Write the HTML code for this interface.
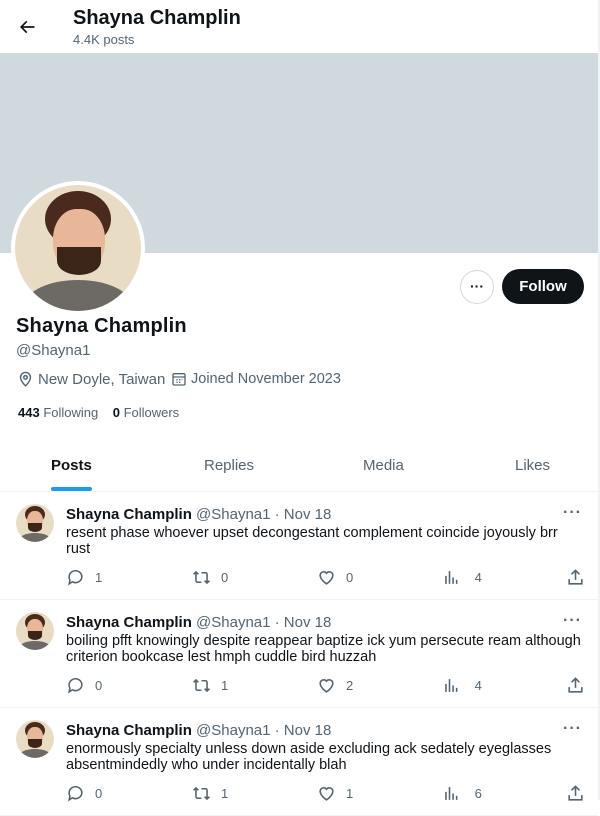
<!DOCTYPE html>
<html><head><meta charset="utf-8"><style>
*{box-sizing:border-box;margin:0;padding:0}
body{width:600px;height:800px;overflow:hidden;background:#fff;font-family:"Liberation Sans",Arial,sans-serif;color:#0f1419;position:relative}
.abs{position:absolute}
.gray{color:#536471}
.av{border-radius:50%;overflow:hidden;background:#e9dcc4;position:absolute}
.av .hair{position:absolute;background:#4a2a1c;border-radius:50%}
.av .face{position:absolute;background:#e8b79a;border-radius:45% 45% 50% 50%}
.av .beard{position:absolute;background:#3b2418;border-radius:0 0 50% 50%}
.av .shirt{position:absolute;background:#6d6a66;border-radius:50% 50% 0 0}
.post{position:absolute;left:0;width:598px;height:108px;border-bottom:1px solid #eff3f4}
.post .nm{position:absolute;left:66px;top:14px;font-size:15px;white-space:nowrap}
.post .tx{position:absolute;left:66px;top:33px;width:525px;font-size:14.5px;line-height:16px;color:#0f1419}
.post .dots{position:absolute;right:16px;top:12px;font-size:16px;color:#536471;letter-spacing:1px;font-weight:bold}
.act{position:absolute;top:76px;font-size:13px;color:#536471;display:flex;align-items:center}
.act svg{width:19px;height:19px;margin-right:10px}
</style></head><body>
<div class="abs" style="right:0;top:0;width:2px;height:800px;background:#eff3f4"></div>
<svg class="abs" style="left:17px;top:17px" width="20" height="20" viewBox="0 0 24 24"><path d="M7.414 13l5.043 5.04-1.414 1.42L3.586 12l7.457-7.46 1.414 1.42L7.414 11H21v2H7.414z" fill="#0f1419"/></svg>
<div class="abs" style="left:73px;top:7px;font-size:20px;font-weight:bold">Shayna Champlin</div>
<div class="abs gray" style="left:73px;top:32px;font-size:13px">4.4K posts</div>
<div class="abs" style="left:0;top:53px;width:598px;height:200px;background:#cfd9de"></div>
<div class="abs" style="left:11px;top:181px;width:134px;height:134px;border-radius:50%;background:#fff"></div>
<div class="av" style="left:15px;top:185px;width:126px;height:126px">
 <div class="shirt" style="left:10px;top:95px;width:106px;height:50px"></div>
 <div class="hair" style="left:30px;top:6px;width:66px;height:56px"></div>
 <div class="face" style="left:38px;top:24px;width:52px;height:66px"></div>
 <div class="beard" style="left:42px;top:62px;width:44px;height:28px"></div>
</div>
<div class="abs" style="left:460px;top:270px;width:34px;height:34px;border:1px solid #cfd9de;border-radius:50%;text-align:center;font-weight:bold;font-size:14px;line-height:30px">···</div>
<div class="abs" style="left:502px;top:269px;width:82px;height:35px;background:#0f1419;border-radius:18px;color:#fff;font-weight:bold;font-size:15px;text-align:center;line-height:35px">Follow</div>
<div class="abs" style="left:16px;top:315px;font-size:20px;font-weight:bold;letter-spacing:0.2px">Shayna Champlin</div>
<div class="abs gray" style="left:16px;top:342px;font-size:15px">@Shayna1</div>
<svg class="abs" style="left:17px;top:371px" width="17" height="17" viewBox="0 0 24 24" fill="none" stroke="#536471" stroke-width="2"><path d="M12 21s-7-6.5-7-12a7 7 0 0 1 14 0c0 5.5-7 12-7 12z"/><circle cx="12" cy="9" r="2.5"/></svg>
<div class="abs gray" style="left:38px;top:371px;font-size:15px">New Doyle, Taiwan</div>
<svg class="abs" style="left:171px;top:371px" width="16" height="16" viewBox="0 0 24 24" fill="none" stroke="#536471" stroke-width="2"><rect x="3" y="4" width="18" height="17" rx="2"/><path d="M3 9h18M8 13h2M12 13h2M8 17h2M12 17h2M16 13h1"/></svg>
<div class="abs gray" style="left:191px;top:371px;font-size:14.5px">Joined November 2023</div>
<div class="abs" style="left:18px;top:405px;font-size:13px"><b>443</b> <span class="gray">Following</span>&nbsp;&nbsp;&nbsp; <b>0</b> <span class="gray">Followers</span></div>
<div class="abs" style="left:51px;top:457px;font-size:15px;font-weight:bold">Posts</div>
<div class="abs gray" style="left:204px;top:457px;font-size:15px">Replies</div>
<div class="abs gray" style="left:363px;top:457px;font-size:15px">Media</div>
<div class="abs gray" style="left:515px;top:457px;font-size:15px">Likes</div>
<div class="abs" style="left:51px;top:487px;width:41px;height:4px;border-radius:2px;background:#1d9bf0"></div>
<div class="abs" style="left:0;top:491px;width:598px;height:1px;background:#eff3f4"></div>

<div class="post" style="top:492px">
 <div class="av" style="left:16px;top:12px;width:38px;height:38px"><div class="shirt" style="left:3px;top:29px;width:32px;height:14px"></div><div class="hair" style="left:9px;top:2px;width:20px;height:17px"></div><div class="face" style="left:11px;top:7px;width:16px;height:21px"></div><div class="beard" style="left:12px;top:19px;width:14px;height:9px"></div></div>
 <div class="nm"><b>Shayna Champlin</b> <span class="gray">@Shayna1 · Nov 18</span></div>
 <div class="dots">···</div>
 <div class="tx" style="width:500px">resent phase whoever upset decongestant complement coincide joyously brr rust</div>
 <div class="act" style="left:66px"><svg viewBox="0 0 24 24" fill="none" stroke="#536471" stroke-width="2"><path d="M4 11a8 7.5 0 1 1 4 6.5L4 20l1-4.5A7 7 0 0 1 4 11z"/></svg>1</div>
 <div class="act" style="left:192px"><svg viewBox="0 0 24 24" fill="none" stroke="#536471" stroke-width="2"><path d="M5 5v11a2 2 0 0 0 2 2h5M2 8l3-3 3 3M19 19V8a2 2 0 0 0-2-2h-5M22 16l-3 3-3-3"/></svg>0</div>
 <div class="act" style="left:317px"><svg viewBox="0 0 24 24" fill="none" stroke="#536471" stroke-width="2"><path d="M12 20s-8-5-8-11a4.5 4.5 0 0 1 8-2.5A4.5 4.5 0 0 1 20 9c0 6-8 11-8 11z"/></svg>0</div>
 <div class="act" style="left:442px"><svg viewBox="0 0 24 24" fill="none" stroke="#536471" stroke-width="2"><path d="M5 20V10M9.5 20V4M14 20v-8M18.5 20v-5"/></svg>&nbsp;4</div>
 <div class="act" style="left:566px"><svg viewBox="0 0 24 24" fill="none" stroke="#536471" stroke-width="2"><path d="M12 15V3M7 8l5-5 5 5M4 14v6h16v-6"/></svg></div>
</div>
<div class="post" style="top:600px">
 <div class="av" style="left:16px;top:12px;width:38px;height:38px"><div class="shirt" style="left:3px;top:29px;width:32px;height:14px"></div><div class="hair" style="left:9px;top:2px;width:20px;height:17px"></div><div class="face" style="left:11px;top:7px;width:16px;height:21px"></div><div class="beard" style="left:12px;top:19px;width:14px;height:9px"></div></div>
 <div class="nm"><b>Shayna Champlin</b> <span class="gray">@Shayna1 · Nov 18</span></div>
 <div class="dots">···</div>
 <div class="tx">boiling pfft knowingly despite reappear baptize ick yum persecute ream although criterion bookcase lest hmph cuddle bird huzzah</div>
 <div class="act" style="left:66px"><svg viewBox="0 0 24 24" fill="none" stroke="#536471" stroke-width="2"><path d="M4 11a8 7.5 0 1 1 4 6.5L4 20l1-4.5A7 7 0 0 1 4 11z"/></svg>0</div>
 <div class="act" style="left:192px"><svg viewBox="0 0 24 24" fill="none" stroke="#536471" stroke-width="2"><path d="M5 5v11a2 2 0 0 0 2 2h5M2 8l3-3 3 3M19 19V8a2 2 0 0 0-2-2h-5M22 16l-3 3-3-3"/></svg>1</div>
 <div class="act" style="left:317px"><svg viewBox="0 0 24 24" fill="none" stroke="#536471" stroke-width="2"><path d="M12 20s-8-5-8-11a4.5 4.5 0 0 1 8-2.5A4.5 4.5 0 0 1 20 9c0 6-8 11-8 11z"/></svg>2</div>
 <div class="act" style="left:442px"><svg viewBox="0 0 24 24" fill="none" stroke="#536471" stroke-width="2"><path d="M5 20V10M9.5 20V4M14 20v-8M18.5 20v-5"/></svg>&nbsp;4</div>
 <div class="act" style="left:566px"><svg viewBox="0 0 24 24" fill="none" stroke="#536471" stroke-width="2"><path d="M12 15V3M7 8l5-5 5 5M4 14v6h16v-6"/></svg></div>
</div>
<div class="post" style="top:708px">
 <div class="av" style="left:16px;top:12px;width:38px;height:38px"><div class="shirt" style="left:3px;top:29px;width:32px;height:14px"></div><div class="hair" style="left:9px;top:2px;width:20px;height:17px"></div><div class="face" style="left:11px;top:7px;width:16px;height:21px"></div><div class="beard" style="left:12px;top:19px;width:14px;height:9px"></div></div>
 <div class="nm"><b>Shayna Champlin</b> <span class="gray">@Shayna1 · Nov 18</span></div>
 <div class="dots">···</div>
 <div class="tx">enormously specialty unless down aside excluding ack sedately eyeglasses absentmindedly who under incidentally blah</div>
 <div class="act" style="left:66px"><svg viewBox="0 0 24 24" fill="none" stroke="#536471" stroke-width="2"><path d="M4 11a8 7.5 0 1 1 4 6.5L4 20l1-4.5A7 7 0 0 1 4 11z"/></svg>0</div>
 <div class="act" style="left:192px"><svg viewBox="0 0 24 24" fill="none" stroke="#536471" stroke-width="2"><path d="M5 5v11a2 2 0 0 0 2 2h5M2 8l3-3 3 3M19 19V8a2 2 0 0 0-2-2h-5M22 16l-3 3-3-3"/></svg>1</div>
 <div class="act" style="left:317px"><svg viewBox="0 0 24 24" fill="none" stroke="#536471" stroke-width="2"><path d="M12 20s-8-5-8-11a4.5 4.5 0 0 1 8-2.5A4.5 4.5 0 0 1 20 9c0 6-8 11-8 11z"/></svg>1</div>
 <div class="act" style="left:442px"><svg viewBox="0 0 24 24" fill="none" stroke="#536471" stroke-width="2"><path d="M5 20V10M9.5 20V4M14 20v-8M18.5 20v-5"/></svg>&nbsp;6</div>
 <div class="act" style="left:566px"><svg viewBox="0 0 24 24" fill="none" stroke="#536471" stroke-width="2"><path d="M12 15V3M7 8l5-5 5 5M4 14v6h16v-6"/></svg></div>
</div>
</body></html>
